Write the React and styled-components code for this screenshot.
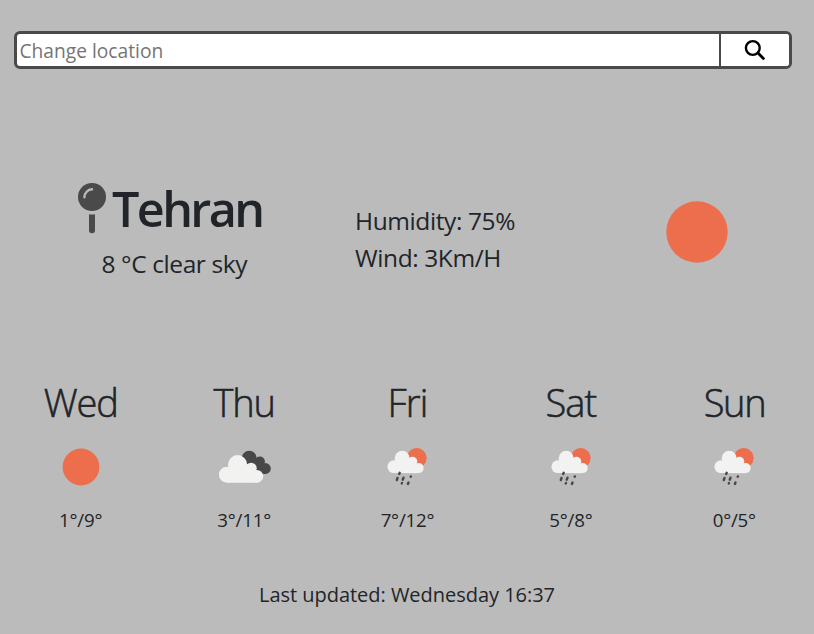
import React from "react";
import styled, { createGlobalStyle } from "styled-components";

const GlobalStyle = createGlobalStyle`
  * { box-sizing: border-box; }
  body {
    margin: 0;
    background: #bbbbbb;
    color: #212529;
    font-family: "Open Sans", "Noto Sans", sans-serif;
    overflow: hidden;
  }
`;

const Page = styled.main`
  height: 634px;
  padding-top: 31px;
  background: #bbbbbb;
  overflow: hidden;
`;

const SearchForm = styled.form`
  display: flex;
  height: 38px;
  margin: 0 22px 0 14px;
  border: 3px solid #4a4a4a;
  border-radius: 6px;
  background: #fff;
  overflow: hidden;
`;

const SearchInput = styled.input`
  flex: 1;
  min-width: 0;
  border: 0;
  padding: 0 0 0 2.5px;
  outline: 0;
  background: transparent;
  font-family: inherit;
  font-size: 19.2px;
  letter-spacing: 0;
  &::placeholder { color: #757575; opacity: 1; }
`;

const SearchButton = styled.button`
  display: flex;
  align-items: center;
  justify-content: center;
  width: 70px;
  padding: 0;
  border: 0;
  border-left: 2px solid #4a4a4a;
  background: #fff;
`;

const Current = styled.section`
  display: grid;
  grid-template-columns: 277px 311px 1fr;
  margin-top: 110px;
  padding-left: 78px;
  height: 101px;
`;

const Place = styled.div``;

const City = styled.h1`
  display: flex;
  align-items: center;
  gap: 6px;
  height: 60px;
  margin: 0;
  font-size: 48.5px;
  font-weight: 600;
  line-height: 58px;
  letter-spacing: -2.6px;
  white-space: nowrap;
`;

const Conditions = styled.p`
  margin: 7px 0 0 23.5px;
  font-size: 24.5px;
  line-height: 36px;
  letter-spacing: -0.4px;
  white-space: nowrap;
`;

const CityName = styled.span`
  height: 60px;
`;

const Details = styled.div`
  padding-top: 23px;
  font-size: 24.5px;
  line-height: 37px;
  letter-spacing: -0.4px;
  white-space: nowrap;
`;

const CurrentIcon = styled.div`
  padding-top: 22px;
  svg { display: block; }
`;

const Forecast = styled.section`
  display: grid;
  grid-template-columns: repeat(5, 1fr);
  margin: 98px -2px 0 -1px;
`;

const Day = styled.article`
  display: flex;
  flex-direction: column;
  align-items: center;
  svg { display: block; margin: 11px 0 9px; }
`;

const DayName = styled.h2`
  margin: 0 calc(${(p) => p.$spacing} + 1px) 0 0;
  font-size: 38px;
  font-weight: 300;
  -webkit-text-stroke: 0.55px currentColor;
  line-height: 48px;
  letter-spacing: ${(p) => p.$spacing};
`;

const Range = styled.div`
  font-size: 18.7px;
  line-height: 28px;
  letter-spacing: -0.2px;
`;

const Updated = styled.footer`
  margin-top: 46px;
  text-align: center;
  font-size: 20px;
  line-height: 30px;
  letter-spacing: -0.03px;
`;

const SearchIcon = () => (
  <svg width="22" height="22" viewBox="0 0 22 22" fill="none" stroke="#000">
    <circle cx="8.8" cy="9" r="6.9" strokeWidth="2.4" />
    <path d="M14 14l5.4 5.4" strokeWidth="2.8" strokeLinecap="round" />
  </svg>
);

const PinIcon = () => (
  <svg width="28" height="52" viewBox="0 0 28 52">
    <circle cx="14" cy="14" r="14" fill="#4a4a4a" />
    <path d="M6.4 14.2A8.1 8.1 0 0 1 14 6.3" fill="none" stroke="#bbb" strokeWidth="2.4" strokeLinecap="round" />
    <path d="M11 31.2q3 .5 6 0V47.5q0 2.7-3 2.7t-3-2.7z" fill="#4a4a4a" />
  </svg>
);

const Sun = ({ size, r }) => (
  <svg width={size} height={size} viewBox={`0 0 ${size} ${size}`}>
    <circle cx={size / 2} cy={size / 2} r={r} fill="#ec6e4c" />
  </svg>
);

const Clouds = () => (
  <svg width="60" height="60" viewBox="4.1 -3 60 60">
    <g fill="#484849">
      <circle cx="39.3" cy="18.3" r="7.6" />
      <circle cx="50" cy="21.6" r="5" />
      <circle cx="55.5" cy="28.5" r="5.4" />
      <path d="M35 22l15-2 6 8v6H44z" />
    </g>
    <g fill="#f2f2f1">
      <circle cx="17" cy="34.7" r="8" />
      <circle cx="27.7" cy="24.7" r="9.6" />
      <circle cx="41.2" cy="28.3" r="5.6" />
      <circle cx="46.9" cy="36.3" r="6.4" />
      <path d="M17 42.7V32l6-6h19l5 9v7.7z" />
    </g>
  </svg>
);

const Rain = () => (
  <svg width="60" height="60" viewBox="7.5 2 60 60">
    <circle cx="47.2" cy="23" r="10" fill="#ec6e4c" />
    <g fill="#f2f2f2">
      <circle cx="24.3" cy="31.7" r="6.4" />
      <circle cx="32.7" cy="23.3" r="7.5" />
      <circle cx="43" cy="26.6" r="4.8" />
      <circle cx="49.2" cy="33.1" r="5" />
      <path d="M24 38.1v-9l5-4h14l6 8v5.1z" />
    </g>
    <g stroke="#484849" strokeWidth="2.4" strokeLinecap="round">
      <path d="M30.2 37.8l-.5 1.2M28 43l-.7 2M34 42.7l-.8 2M41.4 41.4l-.2.4M32.5 48.1l-.2.3M39 47.5l-.6 1.5" />
    </g>
  </svg>
);

const days = [
  { name: "Wed", range: "1°/9°", icon: <Sun size={60} r={18.4} />, spacing: "-1.1px" },
  { name: "Thu", range: "3°/11°", icon: <Clouds />, spacing: "-1.2px" },
  { name: "Fri", range: "7°/12°", icon: <Rain />, spacing: "-0.9px" },
  { name: "Sat", range: "5°/8°", icon: <Rain />, spacing: "-1px" },
  { name: "Sun", range: "0°/5°", icon: <Rain />, spacing: "-1.4px" },
];

export default function App() {
  return (
    <Page>
      <GlobalStyle />
      <SearchForm onSubmit={(e) => e.preventDefault()}>
        <SearchInput placeholder="Change location" />
        <SearchButton aria-label="Search"><SearchIcon /></SearchButton>
      </SearchForm>
      <Current>
        <Place>
          <City><PinIcon /><CityName>Tehran</CityName></City>
          <Conditions>8 °C clear sky</Conditions>
        </Place>
        <Details>
          <div>Humidity: 75%</div>
          <div>Wind: 3Km/H</div>
        </Details>
        <CurrentIcon><Sun size={62} r={30.7} /></CurrentIcon>
      </Current>
      <Forecast>
        {days.map((d) => (
          <Day key={d.name}>
            <DayName $spacing={d.spacing}>{d.name}</DayName>
            {d.icon}
            <Range>{d.range}</Range>
          </Day>
        ))}
      </Forecast>
      <Updated>Last updated: Wednesday 16:37</Updated>
    </Page>
  );
}
